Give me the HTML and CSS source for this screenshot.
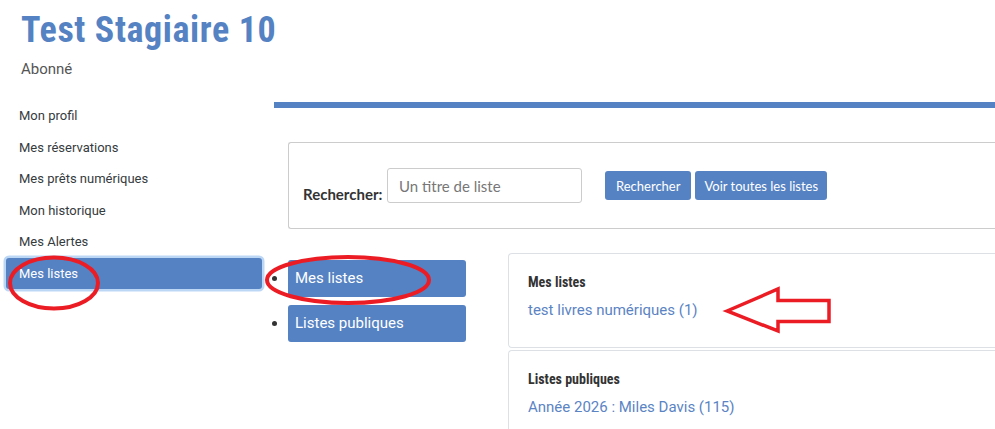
FILE: index.html
```html
<!DOCTYPE html>
<html lang="fr">
  <head>
    <meta charset="UTF-8" />
    <meta name="viewport" content="width=device-width, initial-scale=1.0" />
    <title>Mes listes</title>
    <link rel="stylesheet" href="styles.css">
  </head>
  <body>
    <div class="header">
      <h1 class="name">Test Stagiaire 10</h1>
      <p class="role">Abonné</p>
    </div>

    <div class="page">
      <ul class="sidebar">
        <li class="side-item">Mon profil</li>
        <li class="side-item">Mes réservations</li>
        <li class="side-item">Mes prêts numériques</li>
        <li class="side-item">Mon historique</li>
        <li class="side-item">Mes Alertes</li>
        <li class="side-item active">Mes listes</li>
      </ul>

      <div class="main">
        <div class="search">
          <label class="search-label">Rechercher:</label>
          <input class="search-input" type="text" placeholder="Un titre de liste" />
          <button class="btn btn-first">Rechercher</button>
          <button class="btn">Voir toutes les listes</button>
        </div>

        <div class="lists">
          <ul class="tabs">
            <li><span class="tab">Mes listes</span></li>
            <li><span class="tab">Listes publiques</span></li>
          </ul>
          <div class="panels">
            <div class="panel">
              <h4 class="panel-title">Mes listes</h4>
              <a class="panel-link" href="#">test livres numériques (1)</a>
            </div>
            <div class="panel">
              <h4 class="panel-title">Listes publiques</h4>
              <a class="panel-link" href="#">Année 2026 : Miles Davis (115)</a>
            </div>
          </div>
        </div>
      </div>
    </div>

    <!-- annotations rouges -->
    <svg class="marks" width="995" height="429" viewBox="0 0 995 429">
      <ellipse cx="54" cy="283" rx="44" ry="25.5" />
      <ellipse cx="348" cy="280" rx="81" ry="23" />
      <polygon points="727,311 778,289 778,300.5 829,300.5 829,321.5 778,321.5 778,331" />
    </svg>
  </body>
</html>
```

FILE: styles.css
```css
body {
  margin: 0;
  overflow: hidden;
  font-family: Roboto, "Noto Sans", sans-serif;
  color: #333;
  background: #fff;
}
.header {
  padding: 10px 0 0 21px;
  height: 100px;
  box-sizing: border-box;
}
.name {
  margin: 0;
  font-size: 36px;
  line-height: 41px;
  font-weight: 700;
  letter-spacing: 0.6px;
  font-stretch: condensed;
  font-family: "Roboto Condensed", "Liberation Sans Narrow", "DejaVu Sans Condensed", Roboto, sans-serif;
  color: #5582c2;
}
.role {
  margin: 9px 0 0 0;
  font-size: 15px;
  line-height: 18px;
  color: #555;
}
.page {
  display: flex;
  align-items: flex-start;
}
.sidebar {
  list-style: none;
  margin: 0;
  padding: 0 12px 0 6px;
  width: 256px;
  flex-shrink: 0;
}
.side-item {
  padding: 6px 12px 6px 13px;
  font-size: 13px;
  line-height: 19.5px;
  color: #363b40;
  border-radius: 3px;
}
.side-item.active {
  background: #5582c2;
  color: #fff;
  box-shadow: 0 0 0 2.5px #bcd7f6;
}
.main {
  width: 740px;
  flex-shrink: 0;
  margin-top: 2px;
  border-top: 6px solid #5582c2;
}
.search {
  display: flex;
  align-items: center;
  margin: 34px 0 0 14px;
  padding: 25px 14px;
  border: 1px solid #ccc;
  border-right: none;
  border-radius: 3px 0 0 3px;
}
.search-label {
  align-self: flex-end;
  font-family: Lato, "Open Sans", sans-serif;
  font-weight: 700;
  font-size: 15px;
  line-height: 18px;
  color: #333;
  width: 84px;
  flex-shrink: 0;
}
.search-input {
  width: 195px;
  height: 35px;
  box-sizing: border-box;
  margin: 0;
  padding: 0 11px;
  border: 1px solid #ccc;
  border-radius: 3px;
  font-family: Lato, "Open Sans", sans-serif;
  font-size: 15px;
  color: #333;
}
.search-input::placeholder {
  color: #777;
}
.btn {
  height: 29px;
  margin: 0 0 0 4px;
  padding: 0 9px;
  border: none;
  border-radius: 3px;
  background: #5582c2;
  color: #fff;
  font-family: Lato, "Open Sans", sans-serif;
  font-size: 13px;
}
.btn-first {
  margin-left: 23px;
  padding: 0 11px;
}
.lists {
  display: flex;
  align-items: flex-start;
  margin-top: 24px;
}
.tabs {
  margin: 7px 0 0 0;
  padding: 0 0 0 14px;
  width: 220px;
  flex-shrink: 0;
  list-style: disc;
  color: #333;
}
.tabs li {
  margin-bottom: 8px;
  font-size: 15px;
}
.tab {
  display: block;
  width: 178px;
  box-sizing: border-box;
  padding: 7px 7px 8px;
  line-height: 22px;
  background: #5582c2;
  color: #fff;
  border-radius: 3px;
}
.panels {
  flex: 1;
}
.panel {
  border: 1px solid #dde1e5;
  border-right: none;
  border-radius: 4px 0 0 4px;
  padding: 18px 19px 26px;
  margin-bottom: 2px;
}
.panel-title {
  margin: 0 0 7px 0;
  font-size: 14px;
  line-height: 20px;
  font-weight: 700;
  font-stretch: condensed;
  font-family: "Roboto Condensed", "Liberation Sans Narrow", "DejaVu Sans Condensed", Roboto, sans-serif;
  color: #333;
}
.panel-link {
  display: block;
  font-size: 15px;
  line-height: 22px;
  color: #5b84c4;
  text-decoration: none;
}
.marks {
  position: absolute;
  left: 0;
  top: 0;
  pointer-events: none;
}
.marks ellipse,
.marks polygon {
  fill: none;
  stroke: #ec1c24;
  stroke-width: 4;
}
.marks polygon {
  stroke-width: 3.5;
}
```
